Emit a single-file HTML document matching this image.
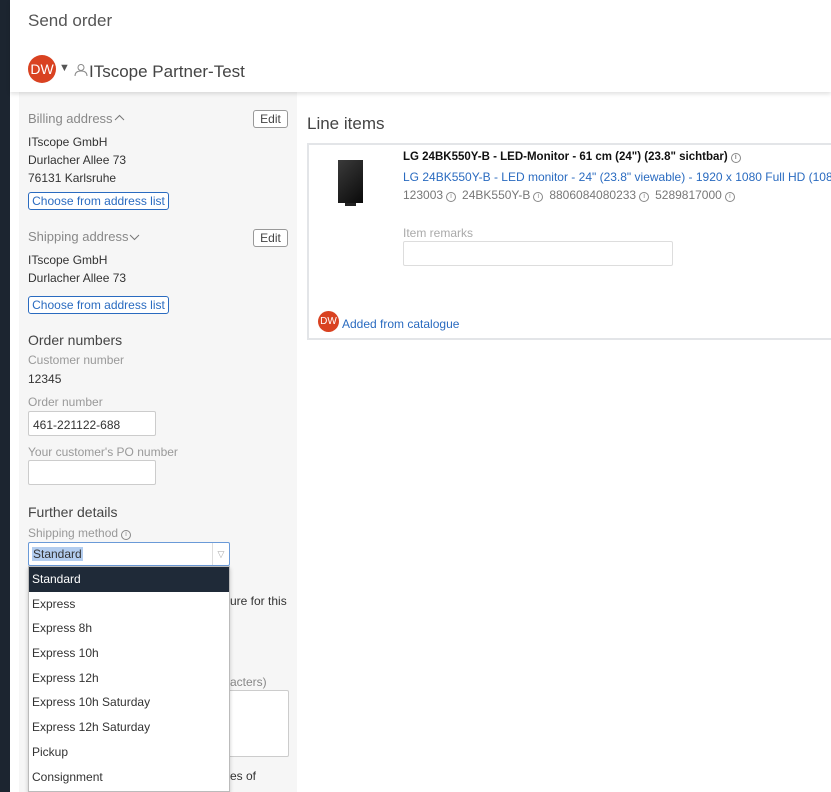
<!DOCTYPE html>
<html><head><style>
*{box-sizing:border-box;margin:0;padding:0}
body{width:831px;height:792px;overflow:hidden;background:#1c2530;font-family:"Liberation Sans",sans-serif;font-size:12px;color:#333;position:relative}
.wrap{position:absolute;left:0;top:0;width:831px;height:792px;overflow:hidden}
.abs{position:absolute}
.modal{position:absolute;left:10px;top:0;width:821px;height:792px;background:#fff;border-radius:4px 0 0 0}
.left{position:absolute;left:19px;top:92px;width:278px;height:700px;background:#f6f6f6}
.hdr{position:absolute;left:10px;top:0;width:821px;height:92px;background:#fff;box-shadow:0 2px 4px rgba(0,0,0,.12)}
.t{position:absolute;white-space:nowrap}
.gray{color:#999}
.btn{position:absolute;border:1px solid #999;border-radius:3px;background:#fff;font-size:12px;text-align:center;color:#444}
.blbtn{position:absolute;border:1px solid #2a6bc0;border-radius:3px;background:#fff;color:#2a6bc0;font-size:12px;text-align:center;line-height:16px;white-space:nowrap}
.inp{position:absolute;border:1px solid #ccc;background:#fff;border-radius:2px}
.dd div{height:24.7px;line-height:24.7px;padding-left:3px;font-size:12px;color:#333}
.av{position:absolute;border-radius:50%;background:#d94221;color:#fff;text-align:center}
.i{display:inline-block;width:10px;height:10px;border:1px solid #888;border-radius:50%;font-size:7px;line-height:8px;text-align:center;color:#888;vertical-align:1px;margin:0 6px 0 3px}
</style></head><body><div class="wrap">
<div class="modal"></div>
<div class="left"></div>
<div class="hdr"></div>
<div class="t" style="left:28px;top:11px;font-size:17px;color:#555">Send order</div>
<div class="av" style="left:28px;top:55px;width:28px;height:28px;line-height:28px;font-size:14px">DW</div>
<div class="t" style="left:59px;top:62px;font-size:11px;color:#555">▼</div>
<svg class="abs" style="left:74px;top:63px" width="14" height="14" viewBox="0 0 14 14"><circle cx="7" cy="4.5" r="3" fill="none" stroke="#888"/><path d="M1 13c0-4 3-5 6-5s6 1 6 5" fill="none" stroke="#888"/></svg>
<div class="t" style="left:89px;top:62px;font-size:17px;color:#444">ITscope Partner-Test</div>

<div class="t" style="left:28px;top:111px;font-size:13px;color:#888">Billing address</div>
<svg class="abs" style="left:114px;top:114px" width="11" height="8"><path d="M1 6l4.5-4.5L10 6" fill="none" stroke="#777"/></svg>
<div class="btn" style="left:253px;top:110px;width:35px;height:18px;line-height:16px">Edit</div>
<div class="t" style="left:28px;top:135px">ITscope GmbH</div>
<div class="t" style="left:28px;top:153px">Durlacher Allee 73</div>
<div class="t" style="left:28px;top:171px">76131 Karlsruhe</div>
<div class="blbtn" style="left:28px;top:192px;width:141px;height:18px">Choose from address list</div>
<div class="t" style="left:28px;top:229px;font-size:13px;color:#888">Shipping address</div>
<svg class="abs" style="left:129px;top:233px" width="11" height="8"><path d="M1 2l4.5 4.5L10 2" fill="none" stroke="#777"/></svg>
<div class="btn" style="left:253px;top:229px;width:35px;height:18px;line-height:16px">Edit</div>
<div class="t" style="left:28px;top:253px">ITscope GmbH</div>
<div class="t" style="left:28px;top:271px">Durlacher Allee 73</div>
<div class="blbtn" style="left:28px;top:296px;width:141px;height:18px">Choose from address list</div>

<div class="t" style="left:28px;top:332px;font-size:14px;color:#444">Order numbers</div>
<div class="t gray" style="left:28px;top:353px">Customer number</div>
<div class="t" style="left:28px;top:372px">12345</div>
<div class="t gray" style="left:28px;top:395px">Order number</div>
<div class="inp" style="left:28px;top:411px;width:128px;height:25px;padding:6px 4px;font-size:12px">461-221122-688</div>
<div class="t gray" style="left:28px;top:445px">Your customer's PO number</div>
<div class="inp" style="left:28px;top:460px;width:128px;height:25px"></div>

<div class="t" style="left:28px;top:504px;font-size:14px;color:#444">Further details</div>
<div class="t gray" style="left:28px;top:526px">Shipping method<span class="i">i</span></div>
<div class="t" style="left:230px;top:594px">ure for this</div>
<div class="t" style="left:230px;top:675px;color:#888">acters)</div>
<div class="inp" style="left:228px;top:690px;width:61px;height:67px"></div>
<div class="t" style="left:230px;top:769px">es of</div>
<div class="inp" style="left:28px;top:542px;width:202px;height:24px;border-color:#6a9ad8"><span style="position:absolute;left:3px;top:4px;background:#b3cdef;padding:0 1px">Standard</span><span style="position:absolute;right:0;top:0;width:17px;height:22px;border-left:1px solid #ddd;color:#aaa;font-size:9px;text-align:center;line-height:22px">▽</span></div>
<div class="abs dd" style="left:28px;top:566px;width:202px;height:226px;background:#fff;border:1px solid #bbb;box-shadow:0 2px 4px rgba(0,0,0,.2)">
<div style="background:#1f2a38;color:#fff">Standard</div><div>Express</div><div>Express 8h</div><div>Express 10h</div><div>Express 12h</div><div>Express 10h Saturday</div><div>Express 12h Saturday</div><div>Pickup</div><div>Consignment</div>
</div>

<div class="t" style="left:307px;top:114px;font-size:17px;color:#444">Line items</div>
<div class="abs" style="left:307px;top:143px;width:524px;height:197px;border:2px solid #e3e5e8;border-right:none"></div>
<div class="abs" style="left:338px;top:160px;width:25px;height:43px;background:linear-gradient(135deg,#3a3a3a,#0a0a0a)"></div>
<div class="abs" style="left:345px;top:203px;width:11px;height:3px;background:#222"></div>
<div class="t" style="left:403px;top:151px;font-weight:bold;font-size:11.5px;color:#111">LG 24BK550Y-B - LED-Monitor - 61 cm (24") (23.8" sichtbar)<span class="i">i</span></div>
<div class="t" style="left:403px;top:170px;color:#2a6bc0">LG 24BK550Y-B - LED monitor - 24" (23.8" viewable) - 1920 x 1080 Full HD (1080p) - AH</div>
<div class="t" style="left:403px;top:188px;color:#777">123003<span class="i">i</span>24BK550Y-B<span class="i">i</span>8806084080233<span class="i">i</span>5289817000<span class="i">i</span></div>
<div class="t" style="left:403px;top:226px;color:#aaa">Item remarks</div>
<div class="inp" style="left:403px;top:241px;width:270px;height:25px;border-color:#ddd"></div>
<div class="av" style="left:318px;top:311px;width:21px;height:21px;line-height:21px;font-size:10px">DW</div>
<div class="t" style="left:342px;top:317px;color:#2a6bc0">Added from catalogue</div>
</div></body></html>
